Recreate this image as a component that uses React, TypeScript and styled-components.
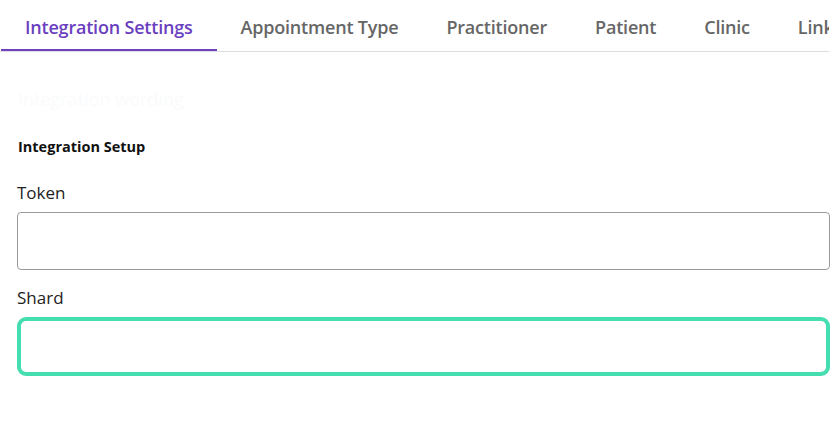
import React from "react";
import styled, { createGlobalStyle } from "styled-components";

const GlobalStyle = createGlobalStyle`
  body {
    margin: 0;
    background: #fff;
    font-family: "Open Sans", "Noto Sans", sans-serif;
  }
`;

const TabBar = styled.div`
  display: flex;
  padding-left: 1px;
  border-bottom: 1px solid #dedede;
  white-space: nowrap;
  overflow: hidden;
  width: 828px;
`;

const Tab = styled.div<{ $active?: boolean }>`
  flex: none;
  height: 52px;
  box-sizing: border-box;
  padding: 5px 24px 0;
  display: flex;
  align-items: center;
  font-size: 18px;
  font-weight: 600;
  letter-spacing: -0.2px;
  color: ${p => (p.$active ? "#6a3fbf" : "#666")};
  border-bottom: 3px solid ${p => (p.$active ? "#6f42c1" : "transparent")};
  margin-bottom: -1px;
`;

const Content = styled.div`
  padding: 0 3px 0 17px;
`;

const GhostTitle = styled.h2`
  margin: 33px 0 0 1px;
  font-size: 18px;
  font-weight: 400;
  line-height: 28px;
  color: #fafbfc;
`;

const SectionTitle = styled.h3`
  margin: 24px 0 0 1px;
  font-size: 14.5px;
  font-weight: 700;
  line-height: 20px;
  color: #111;
`;

const Field = styled.div`
  display: flex;
  flex-direction: column;
`;

const Label = styled.label<{ $gap?: number }>`
  margin: ${p => p.$gap ?? 24}px 0 7px 0;
  font-size: 17px;
  line-height: 24px;
  color: #222;
`;

const Input = styled.input<{ $focused?: boolean }>`
  box-sizing: border-box;
  width: 100%;
  height: ${p => (p.$focused ? 59 : 58)}px;
  border: ${p => (p.$focused ? "4px solid #44deb0" : "1px solid #9a9a9a")};
  border-radius: ${p => (p.$focused ? "9px" : "4px")};
  outline: none;
  font-size: 16px;
  padding: 0 12px;
  background: #fff;
`;

const tabs = ["Integration Settings", "Appointment Type", "Practitioner", "Patient", "Clinic", "Linked Accounts"];

export default function App() {
  return (
    <>
      <GlobalStyle />
      <TabBar>
        {tabs.map((t, i) => (
          <Tab key={t} $active={i === 0}>{t}</Tab>
        ))}
      </TabBar>
      <Content>
        <GhostTitle>Integration wording</GhostTitle>
        <SectionTitle>Integration Setup</SectionTitle>
        <Field>
          <Label>Token</Label>
          <Input />
        </Field>
        <Field>
          <Label $gap={16}>Shard</Label>
          <Input $focused />
        </Field>
      </Content>
    </>
  );
}
